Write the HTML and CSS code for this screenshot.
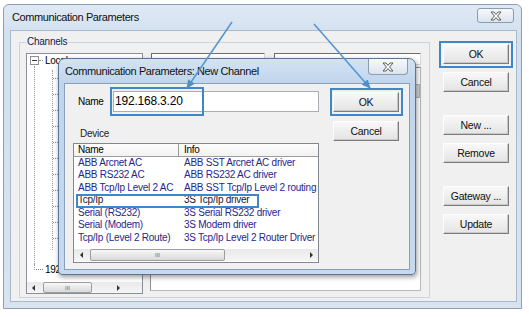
FILE: index.html
```html
<!DOCTYPE html>
<html>
<head>
<meta charset="utf-8">
<link rel="stylesheet" href="styles.css">
</head>
<body>
<div class="stage">
  <div class="win outer">
    <div class="titlebar">
      <span class="title">Communication Parameters</span>
      <div class="close">
        <svg width="12" height="10" viewBox="0 0 12 10"><polygon points="1,1 4,1 6,3.4 8,1 11,1 7.6,5 11,9 8,9 6,6.6 4,9 1,9 4.4,5" fill="#fff" stroke="#5c5c5c" stroke-width="1" stroke-linejoin="round"/></svg>
      </div>
    </div>
    <div class="client">
      <fieldset class="group">
        <legend>Channels</legend>
        <div class="group-body">
          <div class="tree">
            <div class="tree-area">
              <div class="t-root"><span class="exp"></span><span class="t-dash"></span><span class="t-text">Local_</span></div>
              <div class="t-sub">
                <div class="t-sub2">
                  <div class="t-tick"></div><div class="t-tick"></div><div class="t-tick"></div>
                  <div class="t-tick"></div><div class="t-tick"></div><div class="t-tick"></div>
                  <div class="t-tick"></div><div class="t-tick"></div><div class="t-tick"></div>
                  <div class="t-tick"></div><div class="t-tick"></div>
                </div>
              </div>
              <div class="t-last"><span class="elbow"></span><span class="t-text">192.168.3.20</span></div>
            </div>
            <div class="hs tree-hs">
              <span class="arr l"></span>
              <span class="thumb tree-thumb">III</span>
              <span class="arr r tree-r"></span>
            </div>
          </div>
          <div class="props">
            <div class="props-head">
              <div class="ph ph1">Routing</div>
              <div class="ph ph2">LRB26 LRB26 LRB26</div>
            </div>
            <div class="props-body"><span class="knob"></span></div>
          </div>
        </div>
      </fieldset>
      <div class="buttons">
        <div class="btn">OK</div>
        <div class="btn">Cancel</div>
        <div class="btn gap">New ...</div>
        <div class="btn">Remove</div>
        <div class="btn gap">Gateway ...</div>
        <div class="btn">Update</div>
      </div>
    </div>
  </div>

  <div class="win dlg">
    <div class="titlebar">
      <span class="title">Communication Parameters: New Channel</span>
      <div class="close">
        <svg width="12" height="10" viewBox="0 0 12 10"><polygon points="1,1 4,1 6,3.4 8,1 11,1 7.6,5 11,9 8,9 6,6.6 4,9 1,9 4.4,5" fill="#fff" stroke="#5c5c5c" stroke-width="1" stroke-linejoin="round"/></svg>
      </div>
    </div>
    <div class="client">
      <div class="nc-main">
        <div class="name-row">
          <span class="lbl">Name</span>
          <div class="input">192.168.3.20</div>
        </div>
        <div class="device">Device</div>
        <div class="list">
          <div class="lhead"><span>Name</span><span>Info</span></div>
          <div class="row"><span>ABB Arcnet AC</span><span>ABB SST Arcnet AC driver</span></div>
          <div class="row"><span>ABB RS232 AC</span><span>ABB RS232 AC driver</span></div>
          <div class="row"><span>ABB Tcp/Ip Level 2 AC</span><span>ABB SST Tcp/Ip Level 2 routing</span></div>
          <div class="row sel"><span>Tcp/Ip</span><span>3S Tcp/Ip driver</span></div>
          <div class="row"><span>Serial (RS232)</span><span>3S Serial RS232 driver</span></div>
          <div class="row"><span>Serial (Modem)</span><span>3S Modem driver</span></div>
          <div class="row"><span>Tcp/Ip (Level 2 Route)</span><span>3S Tcp/Ip Level 2 Router Driver</span></div>
          <div class="hs list-hs">
            <span class="arr l"></span>
            <span class="thumb list-thumb">III</span>
            <span class="fill"></span>
            <span class="arr r"></span>
          </div>
        </div>
      </div>
      <div class="nc-side">
        <div class="btn ok2">OK</div>
        <div class="btn cancel2">Cancel</div>
      </div>
    </div>
  </div>

  <div class="mark m-name"></div>
  <div class="mark m-ok2"></div>
  <div class="mark m-ok1"></div>
  <div class="mark m-tcp"></div>

  <svg class="arrows" width="529" height="317" viewBox="0 0 529 317">
    <defs>
      <marker id="ah" markerUnits="userSpaceOnUse" markerWidth="9" markerHeight="8" refX="8" refY="4" orient="auto">
        <path d="M0,0 L9,4 L0,8 z" fill="#4f8fcc"/>
      </marker>
    </defs>
    <line x1="232" y1="22" x2="187" y2="88" stroke="#5a98d2" stroke-width="1.6" marker-end="url(#ah)"/>
    <line x1="314" y1="24" x2="370" y2="88" stroke="#5a98d2" stroke-width="1.6" marker-end="url(#ah)"/>
  </svg>
</div>
</body>
</html>
```

FILE: styles.css
```css
* { box-sizing: border-box; }
html, body { margin: 0; padding: 0; background: #fff; }
body {
  font-family: "Liberation Sans", Arial, sans-serif;
  font-size: 10px;
  letter-spacing: -0.25px;
  color: #000;
}
.stage {
  position: relative;
  width: 529px;
  height: 317px;
  overflow: hidden;
  padding: 4px 0 0 3px;
}

/* windows */
.win {
  display: flex;
  flex-direction: column;
  border: 1px solid #8193aa;
}
.outer {
  width: 519px;
  height: 305px;
  border-radius: 6px 6px 0 0;
  border-color: #8d9db2;
  background: linear-gradient(#dfe9f5, #d3e0ee 30px, #d8e3f0);
}
.titlebar {
  display: flex;
  align-items: flex-start;
  justify-content: space-between;
  height: 25px;
  flex: none;
}
.title {
  font-size: 11px;
  letter-spacing: -0.4px;
  line-height: 25px;
  padding-left: 8px;
  color: #111;
}
.close {
  display: flex;
  align-items: center;
  justify-content: center;
  border: 1px solid #8c9bae;
  background: linear-gradient(#f6f9fc, #dbe4ee);
}
.outer .close {
  width: 37px;
  height: 15px;
  margin: 3px 7px 0 0;
  border-radius: 3px;
}
.client {
  flex: 1;
  display: flex;
  align-items: flex-start;
  margin: 0 4px 6px 6px;
  border: 1px solid #a9b9cd;
  background: #f0f0f0;
}

/* group box */
.group {
  margin: 5px 0 0 8px;
  padding: 5px 6px 0 6px;
  width: 411px;
  height: 262px;
  min-width: 0;
  border: 1px solid #cdd3da;
}
.group legend {
  padding: 0 1px;
  line-height: 12px;
  color: #1a1a4a;
}
.group-body {
  display: flex;
  align-items: flex-start;
  gap: 7px;
}
.tree {
  width: 117px;
  height: 241px;
  border: 1px solid #8a8f98;
  background: #fff;
  display: flex;
  flex-direction: column;
}
.tree-area {
  flex: 1;
  padding: 1px 0 0 3px;
}
.t-root {
  display: flex;
  align-items: center;
  height: 11px;
}
.exp {
  width: 9px;
  height: 9px;
  border: 1px solid #8f8f8f;
  background: #fff;
  display: flex;
  align-items: center;
  justify-content: center;
}
.exp::before {
  content: "";
  width: 5px;
  border-top: 1px solid #333;
}
.t-dash {
  width: 4px;
  border-top: 1px dotted #8a8a8a;
}
.t-text {
  padding-left: 2px;
  line-height: 11px;
  white-space: nowrap;
}
.t-sub {
  margin-left: 4px;
  height: 198px;
  border-left: 1px dotted #9a9a9a;
  padding-top: 4px;
}
.t-sub2 {
  margin-left: 17px;
  height: 180px;
  border-left: 1px dotted #9a9a9a;
}
.t-tick {
  height: 16px;
  display: flex;
  align-items: center;
}
.t-tick::before {
  content: "";
  width: 7px;
  border-top: 1px dotted #8a8a8a;
}
.t-last {
  display: flex;
  align-items: flex-start;
  height: 12px;
  padding-left: 4px;
}
.elbow {
  width: 9px;
  height: 6px;
  border-left: 1px dotted #9a9a9a;
  border-bottom: 1px dotted #7a7a7a;
}
.t-last .t-text { line-height: 12px; padding-left: 2px; }

/* scrollbars */
.hs {
  display: flex;
  flex: none;
  background: linear-gradient(#e9e9e9, #f5f5f5);
}
.tree-hs { height: 11px; }
.list-hs { height: 12px; margin-top: auto; margin-bottom: 1px; }
.arr {
  width: 14px;
  display: flex;
  align-items: center;
  justify-content: center;
}
.tree-hs .arr { width: 13px; }
.arr.l::before {
  content: "";
  border-top: 3px solid transparent;
  border-bottom: 3px solid transparent;
  border-right: 3px solid #333;
}
.arr.r::before {
  content: "";
  border-top: 3px solid transparent;
  border-bottom: 3px solid transparent;
  border-left: 3px solid #333;
}
.thumb {
  border: 1px solid #9d9d9d;
  border-radius: 2px;
  background: linear-gradient(#f8f8f8, #d9d9d9);
  display: flex;
  align-items: center;
  justify-content: center;
  font-size: 6px;
  letter-spacing: 0;
  color: #6a6a6a;
}
.tree-thumb { margin-left: 3px; width: 49px; }
.tree-r { margin-left: 20px; width: 12px; }
.list-thumb { margin-left: 2px; width: 135px; }
.fill { flex: 1; }

/* right pane */
.props {
  width: 271px;
  height: 238px;
  display: flex;
  flex-direction: column;
}
.props-head {
  display: flex;
  height: 12px;
  flex: none;
}
.ph {
  height: 12px;
  background: #fff;
  border: 1px solid;
  border-color: #6e6e6e #d8d8d8 #d8d8d8 #6e6e6e;
  padding: 3px 0 0 3px;
  line-height: 12px;
  overflow: hidden;
  color: #333;
  white-space: nowrap;
}
.ph1 { margin-left: 1px; width: 114px; }
.ph2 { margin-left: 9px; width: 147px; }
.props-body {
  flex: 1;
  margin-top: 2px;
  background: #fff;
  border: 1px solid;
  border-color: #8e8e8e #b8b8b8 #b8b8b8 #8e8e8e;
  display: flex;
  justify-content: flex-end;
  align-items: flex-start;
}
.knob {
  width: 6px;
  height: 14px;
  margin: 16px 0 0 0;
  background: #d4d4d4;
  border: 1px solid #b0b0b0;
}

/* buttons */
.buttons {
  display: flex;
  flex-direction: column;
  width: 66px;
  margin: 13px 0 0 13px;
}
.btn {
  width: 66px;
  height: 20px;
  display: flex;
  align-items: center;
  justify-content: center;
  background: linear-gradient(#f8f8f8, #e4e4e4);
  border: 1px solid;
  border-color: #fdfdfd #7c7c7c #7c7c7c #fdfdfd;
  box-shadow: inset -1px -1px 0 #c8c8c8;
  color: #111;
  font-size: 10.5px;
}
.btn + .btn { margin-top: 8px; }
.btn.gap { margin-top: 23px; }

/* new channel dialog */
.dlg {
  position: absolute;
  left: 58px;
  top: 58px;
  width: 358px;
  height: 217px;
  border-color: #5a7595;
  border-radius: 7px 7px 4px 4px;
  background: linear-gradient(#d3e3f4, #c0d5ec 24px, #c6d9ee);
  box-shadow: 1px 2px 5px rgba(0, 0, 0, 0.4);
}
.dlg .titlebar { height: 24px; }
.dlg .title { line-height: 24px; padding-left: 6px; }
.dlg .close {
  width: 40px;
  height: 16px;
  margin-right: 7px;
  border-top: none;
  border-radius: 0 0 4px 4px;
}
.dlg .client {
  margin: 0 5px 4px 5px;
  border-color: #8aa0ba;
}
.nc-main {
  width: 246px;
  margin-left: 8px;
  display: flex;
  flex-direction: column;
}
.name-row {
  display: flex;
  height: 21px;
  margin-top: 7px;
}
.lbl {
  width: 40px;
  padding-left: 5px;
  line-height: 21px;
}
.input {
  width: 206px;
  height: 21px;
  background: #fff;
  border: 1px solid #abadb3;
  padding-left: 1px;
  font-size: 12px;
  letter-spacing: -0.2px;
  line-height: 18px;
}
.device {
  margin-top: 16px;
  line-height: 12px;
  padding-left: 7px;
  color: #222;
}
.list {
  margin-top: 3px;
  height: 120px;
  border: 1px solid #828790;
  background: #fff;
  display: flex;
  flex-direction: column;
}
.lhead {
  display: grid;
  grid-template-columns: 105px 1fr;
  height: 13px;
  flex: none;
  background: linear-gradient(#fdfdfd, #f1f1f1);
}
.lhead span {
  line-height: 12px;
  padding-left: 4px;
  border-bottom: 1px solid #9c9c9c;
}
.lhead span:first-child { border-right: 1px solid #9c9c9c; }
.lhead span + span { padding-left: 5px; }
.row {
  display: grid;
  grid-template-columns: 105px 1fr;
  height: 12.45px;
  line-height: 12.45px;
  color: #26268f;
  white-space: nowrap;
  flex: none;
}
.row span { overflow: hidden; padding-left: 4px; }
.row span + span { padding-left: 5px; }
.row.sel { color: #151530; }
.nc-side {
  width: 66px;
  margin-left: 14px;
  display: flex;
  flex-direction: column;
}
.ok2 { margin-top: 8px; }
.btn.cancel2 { margin-top: 9px; }

/* annotations */
.mark {
  position: absolute;
  border: 2px solid #4087c8;
}
.m-name { left: 110px; top: 87px; width: 94px; height: 29px; }
.m-ok2 { left: 330px; top: 88px; width: 73px; height: 28px; }
.m-ok1 { left: 439px; top: 41px; width: 74px; height: 27px; }
.m-tcp { left: 76px; top: 194px; width: 183px; height: 14px; }
.arrows {
  position: absolute;
  left: 0;
  top: 0;
  pointer-events: none;
}
```
